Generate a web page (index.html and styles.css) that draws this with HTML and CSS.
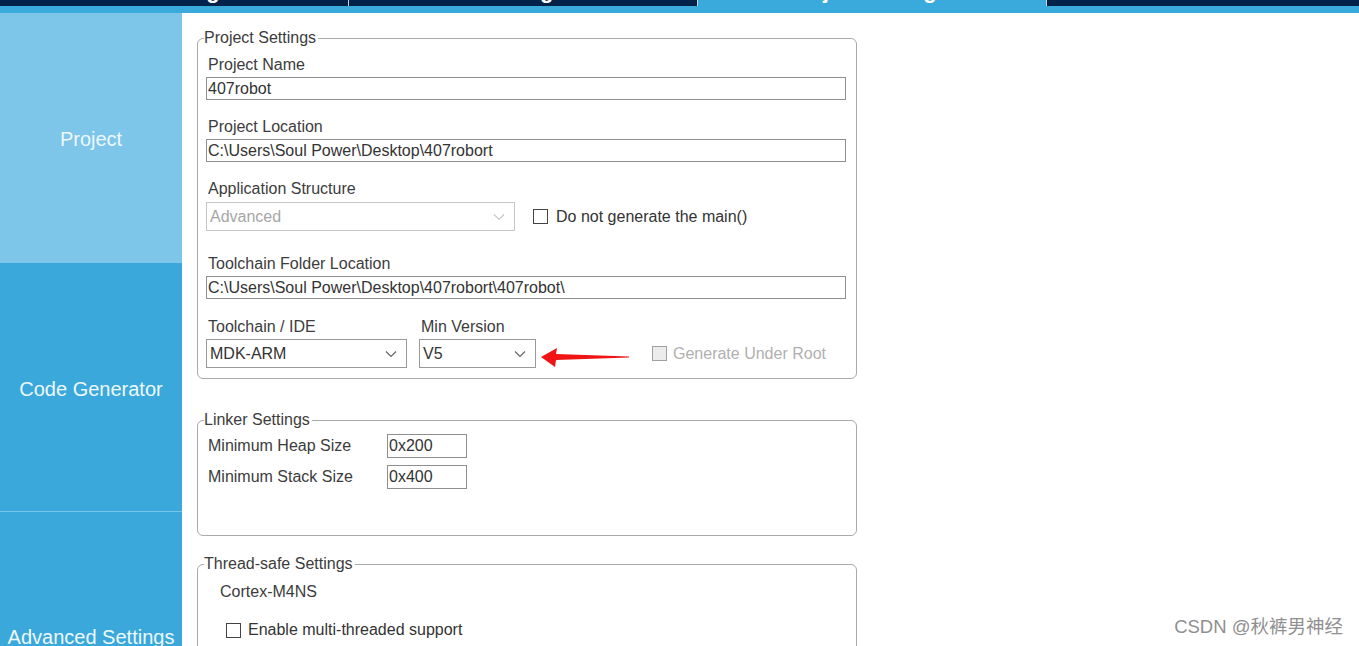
FILE: index.html
```html
<!DOCTYPE html>
<html lang="en">

<head>
    <meta charset="UTF-8">
    <meta name="viewport" content="width=device-width, initial-scale=1.0">
    <title>Project Manager</title>
    <link rel="stylesheet" href="styles.css">
</head>

<body>
    <!-- Pestañas superiores -->
    <div class="tabs">
        <div class="tab"><span>Pinout &amp; Configuration</span></div>
        <div class="tab"><span>Clock Configuration</span></div>
        <div class="tab active"><span>Project Manager</span></div>
        <div class="tab"><span>Tools</span></div>
    </div>
    <div class="strip"></div>

    <div class="main">
        <!-- Menú lateral -->
        <div class="sidebar">
            <div class="side-item current">Project</div>
            <div class="side-item">Code Generator</div>
            <div class="side-item last">Advanced Settings</div>
        </div>

        <div class="content">
            <!-- Project Settings -->
            <fieldset class="group project">
                <legend>Project Settings</legend>
                <label class="field-label first">Project Name</label>
                <input class="text" type="text" value="407robot">

                <label class="field-label">Project Location</label>
                <input class="text" type="text" value="C:\Users\Soul Power\Desktop\407robort">

                <label class="field-label combo-label">Application Structure</label>
                <div class="row">
                    <div class="combo disabled structure">
                        <span>Advanced</span>
                        <svg class="chevron" width="12" height="8" viewBox="0 0 12 8"><path d="M1 1.5 L6 6.5 L11 1.5" fill="none" stroke="#c8c8c8" stroke-width="1.2"/></svg>
                    </div>
                    <div class="check">
                        <span class="box"></span>
                        <span>Do not generate the main()</span>
                    </div>
                </div>

                <label class="field-label tall">Toolchain Folder Location</label>
                <input class="text" type="text" value="C:\Users\Soul Power\Desktop\407robort\407robot\">

                <div class="row toolchain">
                    <div class="col ide">
                        <label class="field-label">Toolchain / IDE</label>
                        <div class="combo">
                            <span>MDK-ARM</span>
                            <svg class="chevron" width="12" height="8" viewBox="0 0 12 8"><path d="M1 1.5 L6 6.5 L11 1.5" fill="none" stroke="#666" stroke-width="1.2"/></svg>
                        </div>
                    </div>
                    <div class="col version">
                        <label class="field-label">Min Version</label>
                        <div class="combo">
                            <span>V5</span>
                            <svg class="chevron" width="12" height="8" viewBox="0 0 12 8"><path d="M1 1.5 L6 6.5 L11 1.5" fill="none" stroke="#666" stroke-width="1.2"/></svg>
                        </div>
                        <!-- flecha de anotación -->
                        <svg class="arrow" width="92" height="24" viewBox="0 0 92 24">
                            <path d="M1 11 L17 2 L16 8 L89 10.5 L89 11.5 L16 14 L15 21 Z" fill="#f01414"/>
                        </svg>
                    </div>
                    <div class="check disabled root">
                        <span class="box"></span>
                        <span>Generate Under Root</span>
                    </div>
                </div>
            </fieldset>

            <!-- Linker Settings -->
            <fieldset class="group linker">
                <legend>Linker Settings</legend>
                <div class="pair">
                    <label>Minimum Heap Size</label>
                    <input class="text small" type="text" value="0x200">
                </div>
                <div class="pair">
                    <label>Minimum Stack Size</label>
                    <input class="text small" type="text" value="0x400">
                </div>
            </fieldset>

            <!-- Thread-safe Settings -->
            <fieldset class="group thread">
                <legend>Thread-safe Settings</legend>
                <div class="core">Cortex-M4NS</div>
                <div class="check multi">
                    <span class="box"></span>
                    <span>Enable multi-threaded support</span>
                </div>
            </fieldset>
        </div>
    </div>

    <div class="watermark">CSDN @秋裤男神经</div>
</body>

</html>
```

FILE: styles.css
```css
body {
    font-family: "Liberation Sans", Arial, sans-serif;
    margin: 0;
    background-color: #fff;
    color: #333;
    overflow: hidden;
    height: 646px;
}

/* Pestañas */
.tabs {
    display: grid;
    grid-template-columns: 348px 348px 348px 1fr;
    column-gap: 1px;
    height: 6px;
    background-color: #c9d3df;
}

.tab {
    background-color: #03224a;
    overflow: hidden;
    text-align: center;
}

.tab span {
    display: block;
    margin-top: -18px;
    font-size: 22px;
    font-weight: bold;
    line-height: 18px;
    color: #fff;
}

.tab.active {
    background-color: #3aa9db;
}

.strip {
    height: 7px;
    background-color: #3aa9db;
}

.main {
    display: flex;
}

/* Menú lateral */
.sidebar {
    width: 182px;
    flex-shrink: 0;
    background-color: #3aa8da;
}

.side-item {
    box-sizing: border-box;
    height: 248px;
    padding-top: 4px;
    display: flex;
    align-items: center;
    justify-content: center;
    font-size: 20px;
    color: #eef8fd;
}

.side-item.current {
    height: 250px;
    padding-top: 2px;
    background-color: #7dc6ea;
}

.side-item.last {
    border-top: 1px solid #74c3e9;
}

/* Contenido */
.content {
    padding-left: 15px;
    padding-top: 16px;
    width: 660px;
}

.group {
    margin: 0;
    border: 1px solid #a9a9a9;
    border-radius: 6px;
    padding: 0 9px;
    min-width: 0;
}

.group legend {
    font-size: 16px;
    line-height: 18px;
    padding: 0 2px 0 0;
    margin-left: -3px;
    color: #3c3c3c;
}

.field-label {
    display: block;
    font-size: 16px;
    line-height: 18px;
    margin-top: 18px;
    margin-bottom: 3px;
    padding-left: 1px;
    color: #3c3c3c;
}

.field-label.first {
    margin-top: 9px;
}

.field-label.combo-label {
    margin-bottom: 4px;
}

.field-label.tall {
    margin-top: 24px;
}

.text {
    display: block;
    box-sizing: border-box;
    width: 100%;
    height: 23px;
    margin: 0 0 0 -1px;
    padding: 0 1px;
    border: 1px solid #8e8e8e;
    border-radius: 0;
    font-family: "Liberation Sans", Arial, sans-serif;
    font-size: 16px;
    color: #333;
    background-color: #fff;
}

.row {
    display: flex;
    align-items: center;
}

.combo {
    box-sizing: border-box;
    height: 29px;
    border: 1px solid #9a9a9a;
    display: flex;
    align-items: center;
    justify-content: space-between;
    padding: 0 9px 0 3px;
    font-size: 16px;
    color: #333;
    margin-left: -1px;
}

.combo.disabled {
    border-color: #c6c6c6;
    color: #a6a6a6;
}

.structure {
    width: 309px;
}

.check {
    display: flex;
    align-items: center;
    font-size: 16px;
    line-height: 18px;
    color: #333;
}

.check .box {
    width: 13px;
    height: 13px;
    border: 1px solid #444;
    background-color: #fff;
    margin-right: 8px;
}

.row .check {
    margin-left: 18px;
}

.check.disabled {
    color: #b0b0b0;
}

.check.disabled .box {
    width: 13px;
    height: 13px;
    border-color: #a0a0a0;
    background-color: #ececec;
    margin-right: 6px;
}

.toolchain {
    align-items: flex-end;
    padding-bottom: 10px;
}

.toolchain .field-label {
    margin-top: 19px;
}

.col.ide {
    width: 200px;
}

.col.version {
    position: relative;
    width: 116px;
    margin-left: 13px;
}

.check.root {
    margin-left: 116px;
    height: 29px;
}

.arrow {
    position: absolute;
    left: 120px;
    top: 47px;
}

/* Linker */
.linker {
    margin-top: 32px;
    padding-top: 5px;
    padding-bottom: 46px;
}

.pair {
    display: flex;
    align-items: center;
    margin-bottom: 7px;
}

.pair:last-child {
    margin-bottom: 0;
}

.pair label {
    width: 179px;
    font-size: 16px;
    color: #3c3c3c;
    padding-left: 1px;
}

.text.small {
    width: 80px;
    height: 24px;
    margin-left: 0;
}

/* Thread-safe */
.thread {
    margin-top: 19px;
    height: 120px;
}

.core {
    font-size: 16px;
    line-height: 18px;
    margin: 10px 0 0 13px;
    color: #3c3c3c;
}

.check.multi {
    margin: 20px 0 0 19px;
}

.check.multi .box {
    margin-right: 7px;
}

.watermark {
    position: absolute;
    right: 16px;
    bottom: 8px;
    font-family: "Liberation Sans", "Noto Sans CJK SC", sans-serif;
    font-size: 18.5px;
    color: #8f8f8f;
}
```
